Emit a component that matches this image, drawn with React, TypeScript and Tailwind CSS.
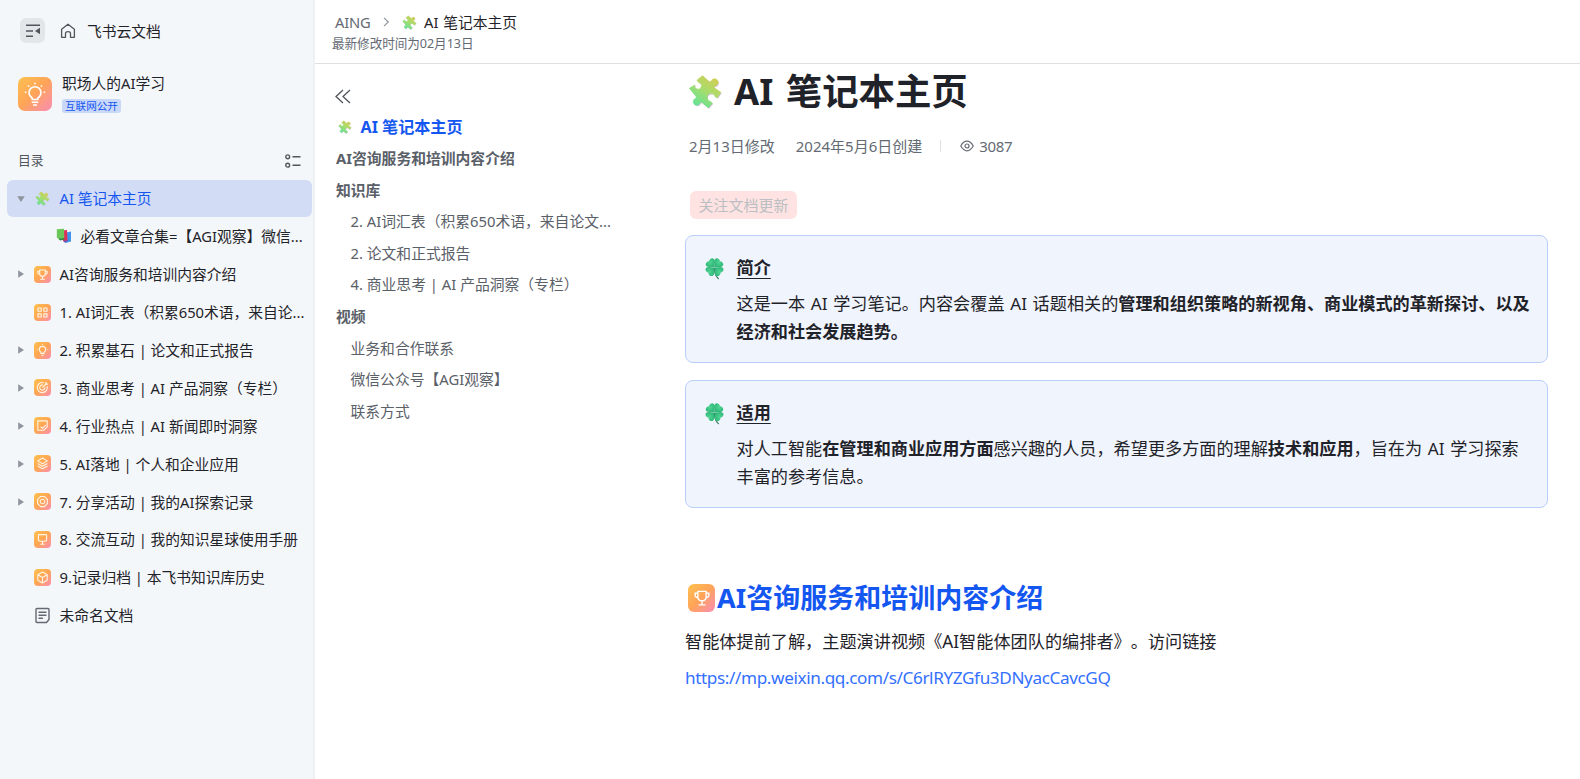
import { ReactNode, useId } from 'react';

type NavItem = {
  label: string;
  icon: ReactNode;
  arrow?: 'down' | 'right';
  active?: boolean;
  child?: boolean;
};

type TocItem = {
  label: string;
  level: 1 | 2;
};

const puzzlePath =
  'M18 57 L35 47 A10 10 0 1 0 47 40 L41 33 L58 19 L77 36 Q83 40 85 34 A11 11 0 1 1 98 50 Q90 51 94 56 L114 70 L103 86 L96 83 A12 12 0 1 0 82 97 L88 102 L76 117 L58 102 Q53 96 50 104 A11 11 0 1 1 36 88 Q42 86 37 80 Z';

function Puzzle({ className }: { className?: string }) {
  const id = useId();
  return (
    <svg viewBox="14 14 106 106" className={className}>
      <defs>
        <linearGradient id={id} x1="0.8" y1="0" x2="0.25" y2="0.9">
          <stop offset="0" stopColor="#d6cd50" />
          <stop offset="0.5" stopColor="#a9dc6c" />
          <stop offset="1" stopColor="#68e392" />
        </linearGradient>
      </defs>
      <path d={puzzlePath} transform="translate(2 2.5)" fill="#d9a9ea" opacity="0.8" />
      <path d={puzzlePath} fill={`url(#${id})`} stroke={`url(#${id})`} strokeWidth="2" strokeLinejoin="round" />
    </svg>
  );
}

function Clover() {
  const id = useId();
  const leaf = 'M0 0 C-1.5 -2.5 -5.6 -4 -5.6 -7 C-5.6 -9.8 -1.8 -10.6 0 -8.8 C1.8 -10.6 5.6 -9.8 5.6 -7 C5.6 -4 1.5 -2.5 0 0Z';
  return (
    <svg viewBox="0 0 20 24" className="h-[22px] w-[19px]">
      <defs>
        <radialGradient id={id} cx="0.5" cy="0.25" r="0.8">
          <stop offset="0" stopColor="#4fd694" />
          <stop offset="1" stopColor="#1fa56a" />
        </radialGradient>
      </defs>
      <path d="M10 11 Q10 19 14.6 23" fill="none" stroke="#3f7f68" strokeWidth="1.4" />
      <g fill={`url(#${id})`} transform="translate(10 10.2)">
        <path d={leaf} transform="rotate(-42)" />
        <path d={leaf} transform="rotate(42)" />
        <path d={leaf} transform="rotate(132)" />
        <path d={leaf} transform="rotate(-132)" />
      </g>
    </svg>
  );
}

function Books() {
  return (
    <svg viewBox="0 0 16 16" className="h-4 w-4">
      <path d="M10.5 4.5 L15 3.5 V13.5 L9 15Z" fill="#3f93e8" />
      <path d="M6 2.5 L11 2 L11.5 13 L7 13Z" fill="#e0305a" />
      <path d="M0.8 1.2 L8 0.8 L8.3 10 L3.5 11.5 L0.8 9.5Z" fill="#6bc75a" />
      <path d="M2.5 10.8 L8.3 10 V11.5 L4 12.6Z" fill="#2c8a42" />
      <path d="M7 13 L12 12 V13 L9 14.8Z" fill="#6a58b8" />
    </svg>
  );
}

// white line drawings shown on the orange tiles, 16x16 grid
const glyphs = {
  trophy: 'M5 3.2 H11 V7 Q11 10 8 10 Q5 10 5 7Z M5 4.5 H3 V6 Q3 7.5 5 7.8 M11 4.5 H13 V6 Q13 7.5 11 7.8 M8 10 V13 M5.5 13 H10.5',
  grid: 'M3.2 3.2 H6.6 V6.6 H3.2Z M9.4 3.2 H12.8 V6.6 H9.4Z M3.2 9.4 H6.6 V12.8 H3.2Z M9.4 9.4 H12.8 V12.8 H9.4Z',
  bulb: 'M6.3 11 V9.8 Q4.6 8.8 4.6 7 A3.4 3.4 0 0 1 11.4 7 Q11.4 8.8 9.7 9.8 V11Z M6.8 13 H9.2 M8 1.4 V2 M2 7 H2.6 M13.4 7 H14',
  target: 'M13 6.5 A5.4 5.4 0 1 1 9.5 2.9 M10.6 7.6 A2.8 2.8 0 1 1 8.4 5.3 M8 8 L12.8 3.2 M11.5 2 V4.5 H14',
  note: 'M3 3 H13 V9.5 L9.5 13 H3Z M6 9.2 L8 11 L11.5 7.5',
  layers: 'M8 2.2 L13.2 5.2 L8 8.2 L2.8 5.2Z M2.8 8 L8 11 L13.2 8 M2.8 10.6 L8 13.6 L13.2 10.6',
  gear: 'M6 2.6 H10 L13.2 5.8 V10.2 L10 13.4 H6 L2.8 10.2 V5.8Z M8 5.6 A2.4 2.4 0 1 1 8 10.4 A2.4 2.4 0 1 1 8 5.6Z',
  screen: 'M4.5 2.8 H11.5 Q12.4 2.8 12.4 3.7 V8 Q12.4 9.8 10.6 9.8 H5.4 Q3.6 9.8 3.6 8 V3.7 Q3.6 2.8 4.5 2.8Z M8 9.8 V13 M5.8 13 H10.2',
  box: 'M8 2.2 L13 5 V11 L8 13.8 L3 11 V5Z M3 5 L8 8 L13 5 M8 8 V13.8',
};

function Tile({ glyph }: { glyph: keyof typeof glyphs }) {
  return (
    <span className="flex h-[17px] w-[17px] items-center justify-center rounded-[4px] bg-linear-to-br from-[#ffc14f] via-[#ffa552] to-[#fb8cab]">
      <svg viewBox="0 0 16 16" className="h-[15px] w-[15px]" fill="none" stroke="#fff4e4" strokeWidth="1.2" strokeLinejoin="round">
        <path d={glyphs[glyph]} />
      </svg>
    </span>
  );
}

function Doc() {
  return (
    <svg viewBox="0 0 17 17" className="h-[17px] w-[17px]" fill="none" stroke="#646a73" strokeWidth="1.4" strokeLinecap="round" strokeLinejoin="round">
      <path d="M3 1.5 H14 Q15 1.5 15 2.5 V12.5 L12.5 15.5 H3 Q2 15.5 2 14.5 V2.5 Q2 1.5 3 1.5Z" />
      <path d="M5 5.3 H12 M5 8.3 H12 M5 11.3 H8.5" />
    </svg>
  );
}

const navItems: NavItem[] = [
  { label: 'AI 笔记本主页', icon: <Puzzle className="h-[15px] w-[15px]" />, arrow: 'down', active: true },
  { label: '必看文章合集=【AGI观察】微信...', icon: <Books />, child: true },
  { label: 'AI咨询服务和培训内容介绍', icon: <Tile glyph="trophy" />, arrow: 'right' },
  { label: '1. AI词汇表（积累650术语，来自论...', icon: <Tile glyph="grid" /> },
  { label: '2. 积累基石 | 论文和正式报告', icon: <Tile glyph="bulb" />, arrow: 'right' },
  { label: '3. 商业思考 | AI 产品洞察（专栏）', icon: <Tile glyph="target" />, arrow: 'right' },
  { label: '4. 行业热点 | AI 新闻即时洞察', icon: <Tile glyph="note" />, arrow: 'right' },
  { label: '5. AI落地 | 个人和企业应用', icon: <Tile glyph="layers" />, arrow: 'right' },
  { label: '7. 分享活动 | 我的AI探索记录', icon: <Tile glyph="gear" />, arrow: 'right' },
  { label: '8. 交流互动 | 我的知识星球使用手册', icon: <Tile glyph="screen" /> },
  { label: '9.记录归档 | 本飞书知识库历史', icon: <Tile glyph="box" /> },
  { label: '未命名文档', icon: <Doc /> },
];

const tocItems: TocItem[] = [
  { label: 'AI咨询服务和培训内容介绍', level: 1 },
  { label: '知识库', level: 1 },
  { label: '2. AI词汇表（积累650术语，来自论文...', level: 2 },
  { label: '2. 论文和正式报告', level: 2 },
  { label: '4. 商业思考 | AI 产品洞察（专栏）', level: 2 },
  { label: '视频', level: 1 },
  { label: '业务和合作联系', level: 2 },
  { label: '微信公众号【AGI观察】', level: 2 },
  { label: '联系方式', level: 2 },
];

function NavRow({ item }: { item: NavItem }) {
  return (
    <a
      className={`flex h-[37px] shrink-0 items-center rounded-md pl-[10px] text-[14.75px] ${
        item.active ? 'bg-[#d2dcf5] text-[#1456f0]' : 'text-[#1f2329]'
      }`}
    >
      <span className={item.child ? 'w-[39px] shrink-0' : 'w-[17px] shrink-0'}>
        {item.arrow && (
          <svg viewBox="0 0 8 8" className={`h-2 w-2 ${item.arrow === 'down' ? 'rotate-90' : ''}`} fill="#8f959e">
            <path d="M1.2 0.2 L7 4 L1.2 7.8Z" />
          </svg>
        )}
      </span>
      <span className={`flex shrink-0 ${item.child ? 'w-[24.5px]' : 'w-[25.6px]'} ${item.active ? 'pl-[1px]' : ''}`}>{item.icon}</span>
      <span className="whitespace-nowrap">{item.label}</span>
    </a>
  );
}

function Sidebar() {
  return (
    <aside className="flex w-[315px] shrink-0 flex-col border-r-2 border-[#eff0f1] bg-[#f4f7fa] text-[#1f2329]">
      <div className="flex h-[61px] items-center pl-5 text-[14.75px]">
        <button className="flex h-[25px] w-[25px] items-center justify-center rounded-md bg-[#e3e6e9]">
          <svg viewBox="0 0 16 16" className="h-4 w-4" fill="none" stroke="#51565d" strokeWidth="1.4">
            <path d="M1 2.2 H15 M1 8 H8 M1 13.3 H8" />
            <path d="M15 4.7 V11.3 L10 8Z" fill="#51565d" stroke="none" />
          </svg>
        </button>
        <svg viewBox="0 0 16 16" className="ml-[15px] h-4 w-4" fill="none" stroke="#51565d" strokeWidth="1.3" strokeLinejoin="round">
          <path d="M1.6 6.3 L8 1.2 L14.4 6.3 V14.3 H10.5 V10.5 Q10.5 8.6 8 8.6 Q5.5 8.6 5.5 10.5 V14.3 H1.6Z" />
        </svg>
        <span className="ml-[11px] pt-[1px]">飞书云文档</span>
      </div>

      <div className="mt-[16px] flex h-[34px] items-center gap-[10px] pl-[18px]">
        <div className="flex h-[34px] w-[34px] items-center justify-center rounded-[7px] bg-linear-to-br from-[#ffc14f] via-[#ffa358] to-[#f98bb0]">
          <svg viewBox="0 0 24 26" className="h-[24px] w-[22px]" fill="none" stroke="#fff" strokeWidth="1.7" strokeLinecap="round">
            <path d="M9 19 V17.5 Q5.5 15 5.5 11.5 A6.5 6.5 0 0 1 18.5 11.5 Q18.5 15 15 17.5 V19Z" />
            <path d="M9 22 H15 M10.5 25 H13.5 M12 1.3 V1.8 M4.8 4.2 L5.1 4.5 M19.2 4.2 L18.9 4.5 M1.5 11 H2 M22 11 H22.5" />
          </svg>
        </div>
        <div className="flex flex-col items-start pb-[2px]">
          <span className="text-[14.75px] leading-5">职场人的AI学习</span>
          <span className="mt-[6px] rounded-[3px] bg-[#c9d8f8] px-[3px] text-[10.6px] leading-[14px] text-[#1456f0]">互联网公开</span>
        </div>
      </div>

      <div className="mt-[40px] flex h-5 items-center justify-between pr-3 pl-[18px]">
        <span className="text-[12.8px] text-[#51565d]">目录</span>
        <svg viewBox="0 0 16 14" className="h-[14px] w-4" fill="none" stroke="#51565d" strokeWidth="1.4">
          <circle cx="2.7" cy="2.8" r="1.9" />
          <circle cx="2.7" cy="11.2" r="1.9" />
          <path d="M7.5 2.8 H15.5 M7.5 11.2 H15.5" />
        </svg>
      </div>

      <nav className="mt-[9px] flex flex-col gap-[0.9px] pr-[1px] pl-[7px]">
        {navItems.map((item) => (
          <NavRow key={item.label} item={item} />
        ))}
      </nav>
    </aside>
  );
}

function Toc() {
  return (
    <div className="flex w-[300px] shrink-0 flex-col pt-[24px] pl-[21px] text-[14.8px] text-[#5a6068]">
      <svg viewBox="0 0 16 16" className="mb-[6px] -ml-[1px] h-[17px] w-4" fill="none" stroke="#51565d" strokeWidth="1.3">
        <path d="M8 1.5 L1 8 L8 14.5 M15 1.5 L8 8 L15 14.5" />
      </svg>
      <a className="flex h-8 items-center text-[16.1px] font-bold text-[#1456f0]">
        <Puzzle className="mr-[8.5px] ml-[2px] h-[14px] w-[14px]" />
        AI 笔记本主页
      </a>
      {tocItems.map((item) => (
        <a
          key={item.label}
          className={`h-[31.6px] leading-[31.6px] whitespace-nowrap ${item.level === 1 ? 'font-bold' : 'pl-[14.5px]'}`}
        >
          {item.label}
        </a>
      ))}
    </div>
  );
}

function Callout({ title, children }: { title: string; children: ReactNode }) {
  return (
    <div className="flex rounded-lg border border-[#bacefd] bg-[#f0f4fc] pt-[18px] pr-[14px] pb-[16px] pl-[19px]">
      <div className="mr-[12.5px] shrink-0 pt-[4px]">
        <Clover />
      </div>
      <div className="min-w-0 text-[17.15px] leading-[28px] [word-spacing:1.2px]">
        <div className="mb-[8px] font-bold underline underline-offset-4">{title}</div>
        <p>{children}</p>
      </div>
    </div>
  );
}

function Article() {
  return (
    <article className="ml-[70px] w-[863px] text-[#1f2329]">
      <h1 className="mt-[2px] flex h-[50px] items-center pl-[3px] text-[36.4px] font-bold [word-spacing:3px]">
        <Puzzle className="mr-[11px] h-[35px] w-[35px]" />
        AI 笔记本主页
      </h1>
      <div className="mt-[20px] flex h-5 items-center pl-1 text-[15px] text-[#646a73]">
        <span>2月13日修改</span>
        <span className="ml-[21px]">2024年5月6日创建</span>
        <span className="ml-[18px] h-3 w-px bg-[#dee0e3]" />
        <svg viewBox="0 0 14 12" className="mr-[5px] ml-[19px] h-3 w-[14px]" fill="none" stroke="#646a73" strokeWidth="1.2">
          <path d="M0.8 6 Q3.5 1.2 7 1.2 Q10.5 1.2 13.2 6 Q10.5 10.8 7 10.8 Q3.5 10.8 0.8 6Z" />
          <circle cx="7" cy="6" r="2" />
        </svg>
        <span className="tracking-[-0.3px]">3087</span>
      </div>
      <button className="mt-[35px] ml-[5px] block h-7 rounded-md bg-[#fee3e2] px-[8.5px] text-[15px] text-[#bbbfc4]">关注文档更新</button>

      <div className="mt-[16px] flex flex-col gap-[17px]">
        <Callout title="简介">
          这是一本 AI 学习笔记。内容会覆盖 AI 话题相关的<b>管理和组织策略的新视角、商业模式的革新探讨、以及经济和社会发展趋势。</b>
        </Callout>
        <Callout title="适用">
          对人工智能<b>在管理和商业应用方面</b>感兴趣的人员，希望更多方面的理解<b>技术和应用</b>，旨在为 AI 学习探索丰富的参考信息。
        </Callout>
      </div>

      <h2 className="mt-[70px] flex h-10 items-center pl-[3px] text-[27px] font-bold text-[#1456f0]">
        <span className="mr-[2px] flex h-[28px] w-[27px] items-center justify-center rounded-[6px] bg-linear-to-br from-[#ffc14f] via-[#ffa358] to-[#f98bb0]">
          <svg viewBox="0 0 16 16" className="h-[22px] w-[22px]" fill="none" stroke="#fff" strokeWidth="1">
            <path d={glyphs.trophy} />
          </svg>
        </span>
        AI咨询服务和培训内容介绍
      </h2>
      <p className="mt-[10px] text-[17.16px] leading-[28px]">智能体提前了解，主题演讲视频《AI智能体团队的编排者》。访问链接</p>
      <a className="mt-[8px] block text-[17.14px] leading-[28px] tracking-[-0.37px] text-[#3370ff]">
        https://mp.weixin.qq.com/s/C6rlRYZGfu3DNyacCavcGQ
      </a>
    </article>
  );
}

export default function App() {
  return (
    <div className="flex h-[779px] overflow-hidden bg-white font-['Noto_Sans','Noto_Sans_CJK_SC',sans-serif] [text-spacing-trim:space-all]">
      <Sidebar />
      <div className="flex min-w-0 flex-1 flex-col">
        <header className="h-16 shrink-0 border-b border-[#dee0e3] pt-[11px]">
          <div className="flex h-[22px] items-center pl-[20px] text-[14.75px] text-[#646a73]">
            <span className="tracking-[-0.2px]">AING</span>
            <svg viewBox="0 0 8 10" className="ml-[11.5px] h-[10px] w-2" fill="none" stroke="#8f959e" strokeWidth="1.2">
              <path d="M2 0.8 L6.2 5 L2 9.2" />
            </svg>
            <Puzzle className="mr-[7px] ml-3 h-[15px] w-[15px]" />
            <span className="text-[#1f2329] [word-spacing:1px]">AI 笔记本主页</span>
          </div>
          <div className="mt-[1px] h-5 pl-[17px] text-[12.6px] leading-5 tracking-[-0.05px] text-[#646a73]">最新修改时间为02月13日</div>
        </header>
        <main className="flex min-h-0 flex-1">
          <Toc />
          <Article />
        </main>
      </div>
    </div>
  );
}
